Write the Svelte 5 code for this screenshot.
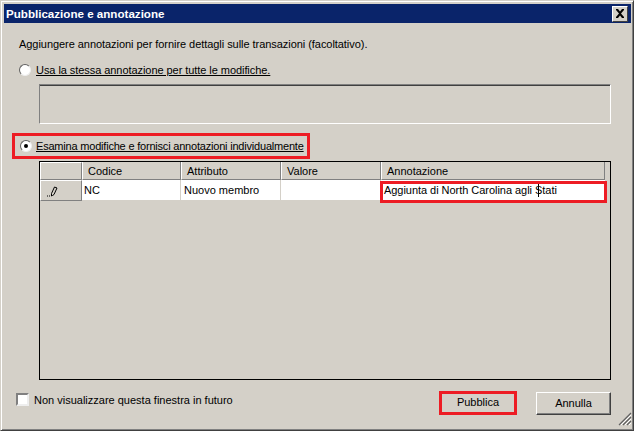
<script>
  const columns = [
    { label: 'Codice', width: 99 },
    { label: 'Attributo', width: 100 },
    { label: 'Valore', width: 100 },
    { label: 'Annotazione', width: 224 }
  ];
</script>

<div class="window">
  <header class="titlebar">
    <span class="title">Pubblicazione e annotazione</span>
    <button class="close" aria-label="Chiudi">
      <svg width="10" height="9" viewBox="0 0 10 9"><path d="M1 0h2l2 2.500 2-2.500h2v1l-3 3.500 3 3.500v1h-2l-2-2.500-2 2.500h-2v-1l3-3.500-3-3.500z" fill="#000"/></svg>
    </button>
  </header>

  <main class="content">
    <p class="intro">Aggiungere annotazioni per fornire dettagli sulle transazioni (facoltativo).</p>

    <label class="option first">
      <span class="radio"></span>
      <span class="option-text">Usa la stessa annotazione per tutte le modifiche.</span>
    </label>

    <div class="shared-note"></div>

    <label class="option marked">
      <span class="radio checked"></span>
      <span class="option-text tight">Esamina modifiche e fornisci annotazioni individualmente</span>
    </label>

    <div class="grid">
      <div class="head">
        <div class="corner"></div>
        {#each columns as col}
          <div class="head-cell" style="width: {col.width}px">{col.label}</div>
        {/each}
      </div>
      <div class="row">
        <div class="row-head">
          <svg width="12" height="12" viewBox="0 0 12 12">
            <path d="M0 11h1M2 11h1" stroke="#000" fill="none"/>
            <path d="M5.500 10.500l-1 .5v-2.500l3-6.500 2.500 1-3 6.500z" stroke="#000" fill="#d4d0c8"/>
          </svg>
        </div>
        <div class="cell code" style="width: 99px">NC</div>
        <div class="cell" style="width: 100px">Nuovo membro</div>
        <div class="cell" style="width: 100px"></div>
        <div class="cell note" style="width: 224px"><span>Aggiunta di North Carolina agli <i class="caret"></i>Stati</span></div>
      </div>
    </div>

    <footer class="footer">
      <label class="check">
        <span class="box"></span>
        <span>Non visualizzare questa finestra in futuro</span>
      </label>
      <div class="actions">
        <button class="btn primary">Pubblica</button>
        <button class="btn">Annulla</button>
      </div>
    </footer>
  </main>

  <svg class="grip" width="14" height="14" viewBox="0 0 14 14">
    <path d="M13 1L1 13M13 5L5 13M13 9L9 13" stroke="#606060" stroke-width="1.200" fill="none"/>
    <path d="M13 3L3 13M13 7L7 13M13 11L11 13" stroke="#fff" fill="none"/>
  </svg>
</div>

<style>
  :global(body) {
    margin: 0;
    background: #d4d0c8;
  }

  .window {
    position: relative;
    box-sizing: border-box;
    width: 634px;
    height: 431px;
    padding: 3px 1px 1px 3px;
    background: #d4d0c8;
    border: 1px solid;
    border-color: #d4d0c8 #404040 #404040 #d4d0c8;
    box-shadow: inset 1px 1px 0 #fff, inset -1px -1px 0 #808080;
    font-family: "Liberation Sans", Tahoma, sans-serif;
    font-size: 11px;
    color: #000;
  }

  .titlebar {
    display: flex;
    align-items: center;
    justify-content: space-between;
    height: 19px;
    padding: 0 3px 0 2px;
    margin-right: 1px;
    background: #0a246a;
  }

  .title {
    color: #fff;
    font-size: 11.600px;
    font-weight: 700;
  }

  .close {
    display: flex;
    align-items: center;
    justify-content: center;
    box-sizing: border-box;
    width: 16px;
    height: 16px;
    padding: 0;
    background: #d4d0c8;
    border: 1px solid;
    border-color: #fff #404040 #404040 #fff;
  }

  .content {
    padding: 0 21px 0 15px;
  }

  .intro {
    margin: 14px 0 0;
    line-height: 14px;
    letter-spacing: -0.05px;
  }

  .option {
    display: flex;
    align-items: center;
    gap: 5px;
    white-space: nowrap;
  }

  .option.first {
    margin-top: 12px;
    height: 14px;
  }

  .option-text {
    text-decoration: underline;
    letter-spacing: -0.06px;
  }

  .option-text.tight {
    letter-spacing: -0.2px;
  }

  .radio {
    position: relative;
    flex: none;
    box-sizing: border-box;
    width: 12px;
    height: 12px;
    border-radius: 50%;
    background: #fff;
    border: 1px solid;
    border-color: #606060 #eee #eee #606060;
  }

  .radio.checked::after {
    content: '';
    position: absolute;
    left: 3px;
    top: 3px;
    width: 4px;
    height: 4px;
    border-radius: 50%;
    background: #000;
  }

  .shared-note {
    box-sizing: border-box;
    height: 40px;
    margin: 7px 0 0 20px;
    border: 1px solid;
    border-color: #808080 #fff #fff #808080;
    box-shadow: inset 0 1px 0 #404040;
  }

  .option.marked {
    box-sizing: border-box;
    width: 298px;
    height: 26px;
    margin: 9px 0 0 -7px;
    padding-left: 5px;
    gap: 4px;
    border: 3px solid #ed1c24;
  }

  .grid {
    box-sizing: border-box;
    height: 219px;
    margin: 2px 0 0 20px;
    background: #d4d0c8;
    border: 1px solid #000;
  }

  .head {
    display: flex;
    height: 18px;
  }

  .corner {
    box-sizing: border-box;
    width: 42px;
    border-right: 1px solid #808080;
    border-bottom: 1px solid #808080;
    border-top: 1px solid #fff;
    border-left: 1px solid #fff;
  }

  .head-cell {
    box-sizing: border-box;
    padding: 2px 0 0 5px;
    border-right: 1px solid #808080;
    border-bottom: 1px solid #808080;
    border-left: 1px solid #fff;
    line-height: 14px;
  }

  .row {
    display: flex;
    height: 21px;
  }

  .row-head {
    box-sizing: border-box;
    display: flex;
    align-items: flex-end;
    padding: 0 0 3px 6px;
    width: 42px;
    border-left: 1px solid #fff;
    border-top: 1px solid #fff;
    border-right: 1px solid #808080;
    border-bottom: 1px solid #808080;
  }

  .cell {
    box-sizing: border-box;
    display: flex;
    align-items: center;
    padding-left: 3px;
    background: #fff;
    border-right: 1px solid #d4d0c8;
    border-bottom: 1px solid #d4d0c8;
  }

  .cell.code {
    padding-left: 2px;
  }

  .cell.note {
    position: relative;
    border: none;
    letter-spacing: -0.04px;
  }

  .cell.note::after {
    content: '';
    position: absolute;
    left: -1px;
    right: -2px;
    top: 1px;
    height: 22px;
    box-sizing: border-box;
    border: 3px solid #ed1c24;
  }

  .caret {
    display: inline-block;
    width: 1px;
    height: 13px;
    margin-right: -4px;
    margin-left: 3px;
    background: #000;
    vertical-align: -3px;
  }

  .footer {
    display: flex;
    justify-content: space-between;
    align-items: flex-start;
    margin-top: 12px;
  }

  .check {
    display: flex;
    align-items: center;
    gap: 5px;
    height: 15px;
    margin-left: -3px;
  }

  .box {
    box-sizing: border-box;
    width: 13px;
    height: 13px;
    background: #fff;
    border: 2px solid;
    border-color: #808080 #eee #eee #808080;
  }

  .actions {
    display: flex;
    gap: 20px;
  }

  .btn {
    box-sizing: border-box;
    width: 75px;
    height: 23px;
    padding: 0 0 2px;
    background: #d4d0c8;
    border: 1px solid;
    border-color: #fff #404040 #404040 #fff;
    box-shadow: inset -1px -1px 0 #808080;
    font: inherit;
    color: #000;
  }

  .btn.primary {
    width: 76px;
    height: 22px;
    outline: 3px solid #ed1c24;
    outline-offset: -2px;
  }

  .grip {
    position: absolute;
    right: 1px;
    bottom: 4px;
  }
</style>
